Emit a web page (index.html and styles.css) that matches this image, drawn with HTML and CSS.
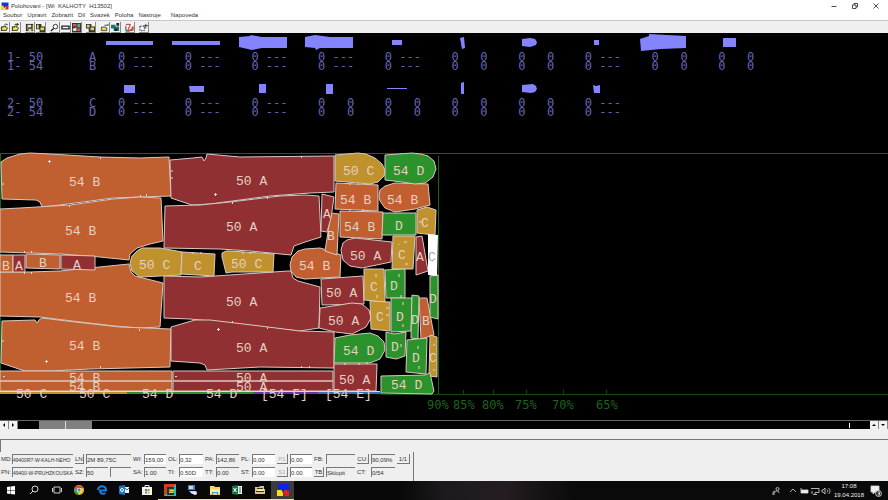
FILE: index.html
```html
<!DOCTYPE html>
<html lang="cs">
<head>
<meta charset="utf-8">
<title>Polohovani</title>
<link rel="stylesheet" href="styles.css">
</head>
<body>
<header class="titlebar">
  <svg class="app-icon" viewBox="0 0 16 16"><path fill="#f3d21c" d="M0 8h7v8H0z"/><path fill="#1734d8" d="M1 1h14v9l-5-1-3 3-2-4-4-1z"/><path fill="#e3221c" d="M8 8l7 1v6H7l3-3z"/></svg>
  <h1 class="title">Polohovani - [Wi &nbsp;KALHOTY &nbsp;H13502]</h1>
  <div class="window-controls">
    <button aria-label="Minimize"><svg viewBox="0 0 8 8"><path d="M1.500 4.500h5"/></svg></button>
    <button aria-label="Restore"><svg viewBox="0 0 8 8"><path d="M1.500 3h3.500v3.500H1.500zM3 3V1.500h3.500V5H5"/></svg></button>
    <button aria-label="Close"><svg viewBox="0 0 8 8"><path d="M1.500 1.500l5 5M6.500 1.500l-5 5"/></svg></button>
  </div>
</header>
<nav class="menu">
  <a href="#">Soubor</a><a href="#">Upravit</a><a href="#">Zobrazit</a><a href="#">Dil</a><a href="#">Svazek</a><a href="#">Poloha</a><a href="#">Nastroje</a><a class="help" href="#">Napoveda</a>
</nav>
<div class="toolbar">
  <div class="group">
    <button aria-label="Open"><svg viewBox="0 0 10 10"><path fill="#222" d="M1 4h2l1-1h3v2h2L7 9H1z"/><path fill="#e6df4a" d="M2 5h2v-1h2v1h2L6.500 8H2z"/><path fill="none" stroke="#222" d="M5 2c1-1 2-1 3 0V1"/></svg></button>
    <button aria-label="Open next"><svg viewBox="0 0 10 10"><path fill="#222" d="M1 4h2l1-1h3v2h2L7 9H1z"/><path fill="#e6df4a" d="M2 5h2v-1h2v1h2L6.500 8H2z"/><path fill="none" stroke="#222" d="M4 1.500h5M7 0v3"/></svg></button>
  </div>
  <div class="group">
    <button aria-label="Save"><svg viewBox="0 0 10 10"><path fill="#222" d="M1 1h8v8H1z"/><path fill="#8a8a2e" d="M2 2h1v4h5V2h1v6H2z"/><path fill="#ddd" d="M3 2h4v3H3zM4 7h3v2H4z"/></svg></button>
    <button aria-label="Save as"><svg viewBox="0 0 10 10"><path fill="#333" d="M0 1h6v6H0zM4 4h6v6H4z"/><path fill="#e6df4a" d="M1 2h2v4H1zM5 5h4v3H5z"/></svg></button>
  </div>
  <div class="group">
    <button aria-label="Zoom"><svg viewBox="0 0 10 10"><circle cx="6" cy="4" r="2.500" fill="#fff" stroke="#222"/><path stroke="#222" stroke-width="1.500" d="M4 6L1 9"/></svg></button>
    <button aria-label="Fit"><svg viewBox="0 0 10 10"><path fill="#fff" stroke="#222" stroke-width="1.500" d="M1 3.500h8v3H1z"/></svg></button>
    <button aria-label="Pieces"><svg viewBox="0 0 10 10"><path fill="#333" d="M0 0h10v10H0z"/><path fill="#d55" d="M1 1h4v3H1zM6 6h3v3H6z"/><path fill="#5aaa80" d="M6 1h3v4H6z"/><path fill="#ddd" d="M1 6l4-1v4H1z"/></svg></button>
  </div>
  <div class="group">
    <button aria-label="Marker"><svg viewBox="0 0 10 10"><path fill="#333" d="M0 1h6v3h4v6H3V6H0z"/><path fill="#d9d36a" d="M1 2h3v3H1zM5 5h4v3H5z"/></svg></button>
  </div>
  <div class="group">
    <button aria-label="Unplace"><svg viewBox="0 0 10 10"><path fill="#e6df4a" stroke="#444" d="M1.500 4.500h4l2 1v3h-6z"/><path fill="none" stroke="#333" d="M5 2.500h4V1"/></svg></button>
    <button aria-label="Place"><svg viewBox="0 0 10 10"><path fill="#137a72" d="M0 2h5v2h4v5H3V6H0z"/><path fill="#222" d="M6 0h3v3H6zM4 6h3v3H4z"/></svg></button>
  </div>
  <div class="group">
    <button aria-label="Cut"><svg viewBox="0 0 10 10"><path fill="#e8d9b0" d="M5 4h4v5H5z"/><path fill="none" stroke="#a22" d="M1 1.500h5L3 8h6V4L6 9"/><path stroke="#333" d="M1 3v6h4" fill="none"/></svg></button>
  </div>
  <div class="group">
    <button aria-label="Options"><svg viewBox="0 0 10 10"><path fill="none" stroke="#334" stroke-dasharray="2 1" d="M1 3.500h5v5H1z"/><path stroke="#334" d="M5 3h5M7.500 1v5" /></svg></button>
  </div>
</div>

<main class="workspace">
  <table class="pieces">
    <colgroup><col class="size"><col class="letter"></colgroup>
    <thead><tr class="thumbs"><td></td><td></td>
      <td><svg><path d="M-1 8h47v4H-1z"/></svg></td>
      <td><svg><path d="M-2 8h48v4H-2z"/></svg></td>
      <td><svg><path d="M-1 4L10 3l1-1 11 2h25v11H22l-10 2-13-3z"/></svg></td>
      <td><svg><path d="M-2 4L8 2l15 2h23v11H13l-4 2-1-2-10-1z"/></svg></td>
      <td><svg><path d="M18 7h10v5H18z"/></svg></td>
      <td><svg><path d="M20 5l4-1 1 11-3 1z"/></svg></td>
      <td><svg><path d="M15 6l8-1 5 1 2 3-1 3-6 2-8-1z"/></svg></td>
      <td><svg><path d="M20 7h5v5h-5z"/></svg></td>
      <td><svg><path d="M-1 6l9-3V1l37 2v12l-25 1-20 2z"/></svg></td>
      <td><svg><path d="M16 5h13v9H16z"/></svg></td>
    </tr></thead>
    <tbody>
      <tr><th>1- 50</th><td>A</td><td>0 ---</td><td>0 ---</td><td>0 ---</td><td>0 ---</td><td>0 ---</td><td>0   0</td><td>0   0</td><td>0 ---</td><td>0   0</td><td>0   0</td></tr>
      <tr><th>1- 54</th><td>B</td><td>0 ---</td><td>0 ---</td><td>0 ---</td><td>0 ---</td><td>0 ---</td><td>0   0</td><td>0   0</td><td>0 ---</td><td>0   0</td><td>0   0</td></tr>
    </tbody>
  </table>
  <table class="pieces">
    <colgroup><col class="size"><col class="letter"></colgroup>
    <thead><tr class="thumbs"><td></td><td></td>
      <td><svg><path d="M17 6h11v8H17z"/></svg></td>
      <td><svg><path d="M15 7h15v6H16z"/></svg></td>
      <td><svg><path d="M19 5h7v9h-7z"/></svg></td>
      <td><svg><path d="M19 5h7v10h-7z"/></svg></td>
      <td><svg><path d="M13 9h20v1H13z"/></svg></td>
      <td><svg><path d="M21 4l3-1v12h-3z"/></svg></td>
      <td><svg><path d="M15 6l11-1 3 2 1 3-2 3-4 1-9-1z"/></svg></td>
      <td><svg><path d="M19 6l3 1 4-1v8h-6z"/></svg></td>
      <td></td><td></td>
    </tr></thead>
    <tbody>
      <tr><th>2- 50</th><td>C</td><td>0 ---</td><td>0 ---</td><td>0 ---</td><td>0   0</td><td>0   0</td><td>0   0</td><td>0   0</td><td>0 ---</td><td></td><td></td></tr>
      <tr><th>2- 54</th><td>D</td><td>0 ---</td><td>0 ---</td><td>0 ---</td><td>0   0</td><td>0   0</td><td>0   0</td><td>0   0</td><td>0 ---</td><td></td><td></td></tr>
    </tbody>
  </table>

  <svg class="marker">
    <g transform="translate(0 -125)">
      <path class="guide" d="M0 153.500H4000M.5 153V394M438.500 156V394"/>
      <path class="guide dim" d="M380 394.500H4000M463.500 390v5M493.500 390v5M526.500 390v5M563.500 390v5M606.500 390v5"/>

      <g class="piece orange">
        <path d="M1 162L7 158 20 154 30 153 50 154 100 157 140 158 169 157 171 196 140 197 113 198 60 205 42 207 40 202 36 200 2 199z"/>
        <path d="M0 209L20 208 70 205 113 199 140 197 161 198 163 241 150 244 137 248 130 254 129 260 100 257 60 254 0 252z"/>
        <path d="M0 272L30 272 60 271 129 264 131 272 135 276 163 283 160 327 140 328 115 326 80 322 40 317 0 316z"/>
        <path d="M2 321L35 320 37 323 39 320 42 318 75 322 120 327 171 329 170 367 90 369 50 371 25 371 1 363z"/>
        <path d="M0 255h13v17H0zM26 254l34 1v14l-34-1zM0 371h172v10H0zM0 381h172v10H0z"/>
        <path d="M290 265L292 257 298 251 305 249 320 248 327 250 341 255 340 277 305 279 296 277 291 271z"/>
        <path d="M336 183L378 185 378 211 335 209z"/>
        <path d="M379 196L380 190 385 186 395 183 428 184 430 205 415 209 395 212 385 208 380 201z"/>
        <path d="M331 213L339 214 337 255 325 251z"/>
        <path d="M340 211L383 212 382 239 340 237z"/>
        <path d="M419 298L427 298 434 335 421 339z"/>
      </g>
      <g class="piece red">
        <path d="M170 160L193 158 202 157 204 161 206 158 207 154 240 157 334 156 334 192 310 193 270 196 240 200 210 204 192 205 171 198z"/>
        <path d="M165 206L200 205 230 202 280 196 305 195 319 196 321 237 305 242 294 246 291 255 250 251 220 249 164 248z"/>
        <path d="M164 276L200 277 230 275 288 271 291 271 293 278 298 281 320 287 319 328 300 331 270 328 220 322 190 319 164 318z"/>
        <path d="M171 327L195 320 210 320 260 326 300 331 334 332 334 368 260 367 207 370 205 365 200 363 171 361z"/>
        <path d="M13 255h12v17H13zM61 255l34 1v14l-34-1zM173 371h160v10H173zM173 381h160v10H173z"/>
        <path d="M322 194L334 197 331 218 327 232 321 231z"/>
        <path d="M341 250L343 243 347 240 355 238 392 242 391 262 362 268 350 266 343 260z"/>
        <path d="M416 237L422 236 428 271 416 275z"/>
        <path d="M321 279L363 276 364 304 322 305z"/>
        <path d="M320 308L352 303 362 304 369 310 371 318 366 327 352 334 335 332 319 328z"/>
        <path d="M334 364L377 364 376 391 334 391z"/>
      </g>
      <g class="piece gold">
        <path d="M130 263L132 256 137 251 142 248 160 248 182 252 181 275 140 277 132 271z"/>
        <path d="M182 252L215 254 214 276 181 274z"/>
        <path d="M222 253L226 251 230 251 274 254 273 272 232 272 226 273 222 257z"/>
        <path d="M335 155L358 153 366 154 375 158 382 164 385 170 384 176 378 182 370 184 335 181z"/>
        <path d="M417 210L427 207 436 210 435 235 417 233z"/>
        <path d="M393 236L415 236 413 269 392 269z"/>
        <path d="M364 269L384 269 385 302 364 300z"/>
        <path d="M370 301L390 302 390 331 371 329z"/>
        <path d="M430 335L437 337 437 377 429 376z"/>
      </g>
      <g class="piece green">
        <path d="M385 155L412 153 421 154 428 156 434 161 436 169 433 177 425 183 415 184 402 182 385 180z"/>
        <path d="M383 213L416 213 416 235 382 235z"/>
        <path d="M385 270L405 269 405 298 386 298z"/>
        <path d="M391 298L412 298 411 331 391 332z"/>
        <path d="M412 295L419 296 418 339 411 338z"/>
        <path d="M430 276L438 275 438 319 430 317z"/>
        <path d="M335 338L350 335 370 333 378 336 384 342 385 350 380 359 370 363 334 363z"/>
        <path d="M386 332L394 334 406 332 405 356 396 359 386 357z"/>
        <path d="M407 340L427 338 426 374 406 372z"/>
        <path d="M381 376L425 375 430 373 434 391 432 394 381 393z"/>
      </g>
      <path class="held" d="M428 234L438 235 437 276 428 275z"/>
      <path fill="#c0922e" d="M0 391h127v3H0z"/><path fill="#2c922c" d="M127 391h127v3H127z"/>
      <path fill="#6a35a8" d="M254 391h64v3h-64z"/><path fill="#3a72b8" d="M318 391h63v3h-63z"/>
      <path class="seam" d="M0 391.500H380"/>
      <path class="notch" d="M48 161.500h3M49.500 160v3M45 361.500h3M46.500 360v3M214 194.500h3M215.500 193v3M217 329.500h3M218.500 328v3M3 376.500h2M175 376.500h2M100.500 157v2M69.500 205v2M140.500 195v2M146.500 194v2M24.500 251v2M31.500 251v2M24.500 272v2M31.500 272v2M100.500 366v2M139.500 329v2M301.500 156v2M232.500 202v2M267.500 197v2M232.500 321v2M267.500 327v2M301.500 366v2M309.500 366v2M350 183v2M358 183v2M350 209v2M363 209v2M404 242h3M405 264h3M399 244v1M419 222h3M376 274v3M377 295v3M386 308h3M386 315h3M399 274v3M401 295v3M403 302v3M403 324v3M401 344v3M418 346v3M419 366v3M367 362v2M345 363v2M359 363v2M171 171h2M171 178h2M2 184h2M2 341h2M433 345h2M433 370h2M193 252v2M201 252v2M243 252v2M250 252v2"/>

      <g class="name">
        <text x="69" y="186">54 B</text><text x="65" y="235">54 B</text><text x="65" y="302">54 B</text><text x="69" y="350">54 B</text>
        <text x="236" y="185">50 A</text><text x="226" y="231">50 A</text><text x="226" y="306">50 A</text><text x="236" y="352">50 A</text>
        <text x="69" y="382">54 B</text><text x="69" y="391">54 B</text><text x="236" y="382">50 A</text><text x="236" y="391">50 A</text>
        <text x="2" y="270">B</text><text x="15" y="270">A</text><text x="39" y="267">B</text><text x="73" y="269">A</text>
        <text x="139" y="269">50 C</text><text x="194" y="270">C</text><text x="231" y="268">50 C</text><text x="299" y="270">54 B</text>
        <text x="343" y="175">50 C</text><text x="393" y="175">54 D</text><text x="340" y="204">54 B</text><text x="387" y="204">54 B</text>
        <text x="323" y="218">A</text><text x="327" y="240">B</text><text x="344" y="231">54 B</text><text x="395" y="230">D</text><text x="421" y="227">C</text>
        <text x="350" y="260">50 A</text><text x="398" y="259">C</text><text x="416" y="261">A</text>
        <text x="326" y="297">50 A</text><text x="328" y="325">50 A</text><text x="370" y="291">C</text><text x="390" y="290">D</text>
        <text x="376" y="321">C</text><text x="396" y="321">D</text><text x="411" y="324">D</text><text x="422" y="325">B</text><text x="429" y="303">D</text>
        <text x="343" y="355">54 D</text><text x="391" y="351">D</text><text x="412" y="362">D</text><text x="429" y="362">C</text>
        <text x="339" y="384">50 A</text><text x="391" y="389">54 D</text>
        <text x="16" y="398">50 C</text><text x="79" y="398">50 C</text><text x="142" y="398">54 D</text><text x="206" y="398">54 D</text><text x="261" y="398">[54 F]</text><text x="325" y="398">[54 E]</text>
      </g>
      <text class="faint" x="428" y="261">C</text>
      <g class="scale"><text x="427" y="409">90%</text><text x="453" y="409">85%</text><text x="482" y="409">80%</text><text x="515" y="409">75%</text><text x="552" y="409">70%</text><text x="596" y="409">65%</text></g>
    </g>
  </svg>
</main>

<div class="scrollbar">
  <button aria-label="Left"><svg viewBox="0 0 8 8"><path d="M5 2v4L3 4z"/></svg></button>
  <button aria-label="Right"><svg viewBox="0 0 8 8"><path d="M3 2v4l2-2z"/></svg></button>
  <div class="track"><div class="thumb"></div><div class="mark"></div></div>
  <button aria-label="Up"><svg viewBox="0 0 8 8"><path d="M2 5h4L4 3z"/></svg></button>
  <button aria-label="Down"><svg viewBox="0 0 8 8"><path d="M2 3h4L4 5z"/></svg></button>
</div>

<div class="message"></div>

<form class="info">
  <label for="md">MD:</label><input id="md" class="ro long" value="49400R7-W-KALH-NEHO">
  <button type="button">LN:</button><input id="ln" aria-label="LN" class="ro" value="2M 89,75C">
  <label for="wi">WI:</label><input id="wi" value="159,00">
  <label for="ol">OL:</label><input id="ol" value="0,32">
  <label for="pa">PA:</label><input id="pa" class="ro" value="142,86">
  <label for="pl">PL:</label><input id="pl" value="0,00">
  <button type="button" disabled>P1</button><input aria-label="P1" value="0,00">
  <label for="fb">FB:</label><input id="fb" class="ro" value="">
  <button type="button">CU:</button><input aria-label="CU" class="ro" value="90,09%">
  <button type="button">1/1</button>

  <label for="pn">PN:</label><input id="pn" class="ro long" value="49400-W-PRUHZKOUSKA">
  <label for="sz">SZ:</label><div class="pair"><input id="sz" class="ro" value="50"><input aria-label="SZ 2" class="ro" value=""></div>
  <label for="sa">SA:</label><input id="sa" class="ro" value="1.00">
  <label for="ti">TI:</label><input id="ti" value="0.50D">
  <label for="tt">TT:</label><input id="tt" class="ro" value="0.00">
  <label for="st">ST:</label><input id="st" value="0,00">
  <button type="button" disabled>S1</button><input aria-label="S1" value="0.00">
  <button type="button">TB</button><input aria-label="TB" class="ro" value="Sklopit">
  <label for="ct">CT:</label><input id="ct" class="ro" value="0/54">
</form>

<footer class="taskbar">
  <div class="apps">
    <button aria-label="Start"><svg viewBox="0 0 12 12"><path fill="#fff" d="M2 3l3-.5V6H2zM5.500 2.400L10 2v4H5.500zM2 6.500h3V10l-3-.5zM5.500 6.500H10v4l-4.500-.5z"/></svg></button>
    <button aria-label="Search"><svg viewBox="0 0 12 12"><circle cx="7" cy="5" r="3" fill="none" stroke="#ddd"/><path stroke="#ddd" d="M5 7L2 10"/></svg></button>
    <button aria-label="Task view"><svg viewBox="0 0 12 12"><path fill="none" stroke="#ccc" d="M3 3h6v6H3zM1.500 4v4M10.500 4v4"/></svg></button>
    <button aria-label="Chrome"><svg viewBox="0 0 12 12"><circle cx="6" cy="6" r="5" fill="#f2c51d"/><path fill="#dc4437" d="M1.500 4A5 5 0 0110.500 4H6L4 7z"/><path fill="#2d9d50" d="M1.500 4L5 9l1 2A5 5 0 011.500 4z"/><circle cx="6" cy="6" r="2.300" fill="#fff"/><circle cx="6" cy="6" r="1.700" fill="#4285f4"/></svg></button>
    <button aria-label="Edge"><svg viewBox="0 0 12 12"><path fill="none" stroke="#1680dc" stroke-width="2" d="M2 6C2 1 10 1 10 6.500H4C4 10 7.500 10.500 9.500 9"/></svg></button>
    <button aria-label="Outlook"><svg viewBox="0 0 12 12"><path fill="#1878c8" d="M1 2l6-1v10l-6-1z"/><path fill="#e8f2fb" d="M7 3h4v6H7z"/><path fill="none" stroke="#1878c8" d="M7 4l2 2 2-2"/><circle cx="4" cy="6" r="1.500" fill="none" stroke="#fff"/></svg></button>
    <button aria-label="Store"><svg viewBox="0 0 12 12"><path fill="none" stroke="#eee" d="M4 4V1.500h4V4"/><path fill="#f4f4f4" d="M1 3h10v8H1z"/><path fill="#e84a25" d="M4 5h2v2H4z"/><path fill="#7cb828" d="M6.500 5h2v2h-2z"/><path fill="#2aa0e4" d="M4 7.500h2v2H4z"/><path fill="#f8b818" d="M6.500 7.500h2v2h-2z"/></svg></button>
    <button class="open" aria-label="Gerber"><svg viewBox="0 0 12 12"><path fill="#28b8c0" d="M0 0h12v12H0z"/><path fill="#d83a28" d="M0 0h12L9 3H3v6L0 12z"/><path fill="#173a28" d="M3 3h7v2H5v4h5v2H3z"/><path fill="#e8cf30" d="M6 6h4v1H6zM5 8h4v1H5z"/></svg></button>
    <button class="open" aria-label="Network"><svg viewBox="0 0 12 12"><path fill="#4d74cc" d="M2 1h7v5H2z"/><path fill="#c7d4f2" d="M3 2h4v3H3zM3 7h5l2 3H6z"/><circle cx="9" cy="9" r="2" fill="#e8e8f4"/></svg></button>
    <button class="open" aria-label="Explorer"><svg viewBox="0 0 12 12"><path fill="#f4d46c" d="M1 2h4l1 1h5v8H1z"/><path fill="#fbeaa4" d="M1 5h10v4H1z"/><path fill="#3a9ad9" d="M3 8h6v3H8V9H4v2H3z"/></svg></button>
    <button class="open" aria-label="Excel"><svg viewBox="0 0 12 12"><path fill="#1c7445" d="M1 2l6-1v10l-6-1z"/><path fill="#e8f3ec" d="M7 2h4v8H7z"/><path stroke="#1c7445" d="M8 4h2M8 6h2M8 8h2"/><path stroke="#fff" d="M2.500 4l3 4M5.500 4l-3 4"/></svg></button>
    <button class="open" aria-label="Files"><svg viewBox="0 0 12 12"><path fill="#d8c67c" d="M1 3h4l1-1h4v3h1v5H1z"/><path fill="#3c3826" d="M3 4h6v1H3zM2 7h8v1H2z"/><path fill="#f1e8b8" d="M3 5h7v2H3z"/></svg></button>
    <button class="open active" aria-label="Polohovani"><svg viewBox="0 0 12 12"><path fill="#f6e018" d="M0 6h6v6H0z"/><path fill="#1222e4" d="M1 0h11v6L8 5 6 9 4 5 1 6z"/><path fill="#e81e18" d="M6 8l2-2 4 1v5H8z"/></svg></button>
  </div>
  <div class="tray">
    <svg viewBox="0 0 10 10"><circle cx="6.500" cy="3" r="1.500"/><path d="M3 9c0-5 5-5 5-2M2 9V6l2-1"/></svg>
    <svg viewBox="0 0 10 10"><path d="M2 6l3-3 3 3"/></svg>
    <svg viewBox="0 0 10 10"><path fill="#eee" d="M2 4h7v3H2zM1 3h2"/></svg>
    <svg viewBox="0 0 10 10"><path d="M1 2.500h8v4H5V8M3 8.500h4M2 5v3"/></svg>
    <svg viewBox="0 0 10 10"><path d="M1 4h1l2-2v6L2 6H1zM6 3.500c1 1 1 2 0 3M7.500 2c2 2 2 4 0 6"/></svg>
    <div class="clock"><time>17:08</time><time>19.04.2018</time></div>
    <svg class="notice" viewBox="0 0 12 12"><path fill="#eee" d="M1 1h8v6H5L3 9V7H1z"/><circle cx="8.500" cy="8.500" r="3" fill="#333"/><path d="M8 7h1.500v3H8M8 8.500h1.500"/></svg>
  </div>
</footer>
</body>
</html>
```
FILE: styles.css
```css
* { box-sizing: border-box; }
body {
  margin: 0;
  min-height: 100vh;
  display: flex;
  flex-direction: column;
  background: #efefef;
  color: #333;
  font: 6px/8px "Liberation Sans", sans-serif;
}
button, input { font: inherit; color: inherit; margin: 0; padding: 0; border: 0; border-radius: 0; background: none; min-width: 0; }
svg { display: block; }

.titlebar { display: flex; align-items: center; height: 11px; padding-left: 1px; gap: 2px; background: #fff; }
.app-icon { width: 8px; height: 8px; }
.title { margin: 0; font-size: 6px; font-weight: normal; }
.window-controls { display: flex; margin-left: auto; padding-right: 8px; gap: 13px; }
.window-controls svg { width: 8px; height: 8px; fill: none; stroke: #222; stroke-width: .8; }

.menu { display: flex; gap: 5px; height: 9px; padding-left: 3px; background: #fff; }
.menu a { color: #333; text-decoration: none; }
.menu .help { margin-left: 5px; }

.toolbar { display: flex; gap: 4px; height: 13px; padding-top: 1px; border-top: 1px solid #c8c8c8; }
.group { display: flex; gap: 1px; }
.group button { width: 10px; height: 11px; border-right: 1px solid #888; border-bottom: 1px solid #888; background: #f4f4f4; }
.group svg { width: 9px; height: 9px; }

.workspace { flex: 1; display: flex; flex-direction: column; gap: 8px; background: #000; overflow: hidden; }
.pieces {
  width: 774px;
  table-layout: fixed;
  border-collapse: collapse;
  color: #6464b4;
  font: 12px/9px "DejaVu Sans Mono", monospace;
  white-space: pre;
}
.pieces .size { width: 89px; }
.pieces .letter { width: 18px; }
.pieces th, .pieces td { height: 9px; padding: 0 0 0 11px; font-weight: normal; text-align: left; }
.pieces th { padding-left: 7px; }
.pieces td:nth-child(2) { padding-left: 0; }
.pieces .thumbs td { height: 20px; padding: 0; }
.thumbs svg { width: 100%; height: 20px; overflow: visible; fill: #8484ff; }

.marker { width: 100%; flex: 1; min-height: 290px; }
.guide { fill: none; stroke: #176417; }
.dim { stroke: #124812; }
.piece { stroke: #d8c8c0; stroke-width: 1; }
.orange { fill: #c06030; }
.red { fill: #903032; }
.gold { fill: #c0922e; }
.green { fill: #2c922c; }
.held { fill: #fff; }
.seam, .notch { fill: none; stroke: #e4d8d0; }
.name, .faint { fill: #e4d0c4; font: 13px "Liberation Mono", monospace; white-space: pre; }
.faint { fill: #aaa; }
.scale { fill: #1c641c; font: 12px "DejaVu Sans Mono", monospace; }

.scrollbar { display: flex; height: 9px; border-top: 1px solid #666; background: #000; }
.scrollbar button { width: 9px; height: 8px; border-right: 1px solid #888; background: #f2f2f2; }
.scrollbar svg { width: 8px; height: 8px; }
.track { flex: 1; display: flex; justify-content: space-between; padding: 0 20px 0 21px; }
.thumb { width: 53px; background: linear-gradient(90deg, transparent 26px, #ddd 26px, #ddd 27px, transparent 27px) #808080; }
.mark { width: 1px; margin: 2px 0 1px; background: #fff; }

.message { height: 13px; margin-top: 10px; border-top: 1px solid #777; border-left: 1px solid #777; }

.info {
  display: grid;
  grid-template-columns: 9px 61px 9px 45px 9px 22px 9px 24px 9px 23px 9px 23px 11px 22px 10px 29px 12px 24px 13px;
  grid-auto-rows: 10px;
  gap: 3px 2px;
  align-self: flex-start;
  align-items: center;
  height: 29px;
  padding: 2px 3px 2px 1px;
  border-right: 1px solid #777;
  white-space: nowrap;
}
.info input { width: 100%; height: 10px; border-top: 1px solid #777; border-left: 1px solid #777; background: #fff; }
.info .ro { background: #efefef; }
.info .long { font-size: 5px; }
.info button { height: 10px; border-right: 1px solid #777; border-bottom: 1px solid #777; }
.info button:disabled { color: #aaa; }
.pair { display: flex; gap: 2px; }

.taskbar { display: flex; height: 19px; background: linear-gradient(90deg, #080808 45%, #1c1a1c 50%, #241c20 57%, #0a0a0a 65%); color: #eee; }
.apps { display: flex; width: 294px; }
.apps button { flex: 1; display: flex; align-items: center; justify-content: center; border-bottom: 1px solid transparent; }
.apps svg { width: 12px; height: 12px; }
.apps .open { border-bottom-color: #f0e48c; }
.apps .active { background: #3c3c3c; }
.tray { display: flex; align-items: center; margin-left: auto; padding-right: 6px; gap: 1px; }
.tray svg { width: 10px; height: 10px; fill: none; stroke: #ddd; stroke-width: .8; }
.tray svg:first-child { margin-right: 6px; }
.tray .notice { width: 12px; height: 12px; }
.clock { display: flex; flex-direction: column; align-items: center; margin: 0 5px 0 2px; line-height: 9px; }
```
